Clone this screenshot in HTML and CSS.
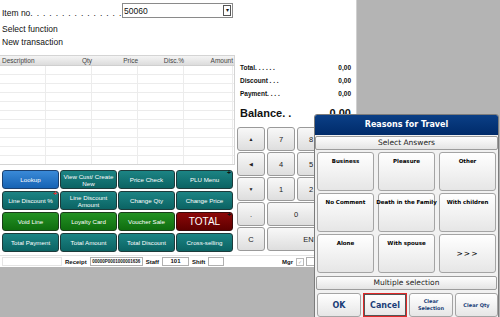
FILE: index.html
```html
<!DOCTYPE html>
<html lang="en">
<head>
    <meta charset="UTF-8">
    <title>POS - Reasons for Travel</title>
    <link rel="stylesheet" href="styles.css">
</head>
<body>
    <div class="screen">
        <div class="main">
            <div class="left">
                <div class="item-row">
                    <span class="item-label">Item no.<span class="dots"> . . . . . . . . . . . . . .</span></span>
                    <div class="item-input">
                        <span>50060</span>
                        <span class="drop">&#9662;</span>
                    </div>
                </div>
                <div class="info-line">Select function</div>
                <div class="info-line">New transaction</div>

                <div class="grid-table">
                    <div class="grid-head">
                        <div class="col c-desc">Description</div>
                        <div class="col">Qty</div>
                        <div class="col">Price</div>
                        <div class="col">Disc.%</div>
                        <div class="col c-amount">Amount</div>
                    </div>
                    <div class="grid-body">
                        <div class="col"></div>
                        <div class="col"></div>
                        <div class="col"></div>
                        <div class="col"></div>
                        <div class="col c-amount"></div>
                    </div>
                </div>

                <div class="func-grid">
                    <button class="fbtn blue">Lookup</button>
                    <button class="fbtn teal">View Cust/ Create New</button>
                    <button class="fbtn teal">Price Check</button>
                    <button class="fbtn teal has-more">PLU Menu</button>
                    <button class="fbtn teal has-more red-mark">Line Discount %</button>
                    <button class="fbtn teal">Line Discount Amount</button>
                    <button class="fbtn teal">Change Qty</button>
                    <button class="fbtn teal">Change Price</button>
                    <button class="fbtn green">Void Line</button>
                    <button class="fbtn green">Loyalty Card</button>
                    <button class="fbtn green">Voucher Sale</button>
                    <button class="fbtn red total has-more">TOTAL</button>
                    <button class="fbtn teal">Total Payment</button>
                    <button class="fbtn teal">Total Amount</button>
                    <button class="fbtn teal">Total Discount</button>
                    <button class="fbtn teal">Cross-selling</button>
                </div>
            </div>

            <div class="right">
                <div class="sum-line"><span>Total. . . . . .</span><span>0,00</span></div>
                <div class="sum-line"><span>Discount . . .</span><span>0,00</span></div>
                <div class="sum-line"><span>Payment. . . .</span><span>0,00</span></div>
                <div class="balance"><span>Balance. .</span><span>0,00</span></div>

                <!-- last column sits under the dialog -->
                <div class="numpad">
                    <button class="key arrow">&#9650;</button>
                    <button class="key">7</button>
                    <button class="key">8</button>
                    <button class="key"></button>
                    <button class="key arrow">&#9664;</button>
                    <button class="key">4</button>
                    <button class="key">5</button>
                    <button class="key"></button>
                    <button class="key arrow">&#9660;</button>
                    <button class="key">1</button>
                    <button class="key">2</button>
                    <button class="key"></button>
                    <button class="key">.</button>
                    <button class="key span2">0</button>
                    <button class="key"></button>
                    <button class="key">C</button>
                    <button class="key span3 enter">ENTER</button>
                </div>
            </div>
        </div>

        <div class="statusbar">
            <div class="sbox wide"></div>
            <span class="slabel">Receipt</span>
            <div class="sbox receipt">00000P0001000001636</div>
            <span class="slabel">Staff</span>
            <div class="sbox staff">101</div>
            <span class="slabel">Shift</span>
            <div class="sbox shift"></div>
            <span class="spacer"></span>
            <span class="slabel">Mgr</span>
            <span class="scheck">&#10003;</span>
            <div class="sbox mgr"></div>
        </div>
    </div>

    <div class="dialog">
        <div class="dlg-title">Reasons for Travel</div>
        <div class="dlg-bar">Select Answers</div>
        <div class="answers">
            <button class="answer">Business</button>
            <button class="answer">Pleasure</button>
            <button class="answer">Other</button>
            <button class="answer">No Comment</button>
            <button class="answer">Death in the Family</button>
            <button class="answer">With children</button>
            <button class="answer">Alone</button>
            <button class="answer">With spouse</button>
            <button class="answer more">&gt;&gt;&gt;</button>
        </div>
        <div class="dlg-bar multi">Multiple selection</div>
        <div class="dlg-actions">
            <button class="act big">OK</button>
            <button class="act big cancel">Cancel</button>
            <button class="act">Clear<br>Selection</button>
            <button class="act">Clear Qty</button>
        </div>
    </div>
</body>
</html>
```

FILE: styles.css
```css
body {
    margin: 0;
    width: 500px;
    height: 317px;
    overflow: hidden;
    background-color: #b4b4b4;
    font-family: 'Liberation Sans', Arial, sans-serif;
    color: #111;
    position: relative;
}

button {
    font-family: inherit;
    margin: 0;
    padding: 0;
    cursor: pointer;
}

.screen {
    width: 356px;
    height: 267px;
    background-color: #fff;
    border-right: 1px solid #d0d0d0;
    display: flex;
    flex-direction: column;
}

.main {
    display: flex;
    height: 255px;
}

.left {
    width: 236px;
}

/* item entry */
.item-row {
    height: 23px;
    display: flex;
    align-items: flex-start;
}

.item-label {
    font-size: 8.5px;
    padding: 8px 0 0 2px;
    width: 120px;
    white-space: nowrap;
    overflow: hidden;
}

.dots {
    word-spacing: 1.6px;
}

.item-input {
    margin-top: 3px;
    width: 108px;
    height: 13px;
    border: 1px solid #8a8a8a;
    display: flex;
    justify-content: space-between;
    align-items: center;
    font-size: 8.5px;
    padding-left: 1px;
}

.drop {
    width: 6px;
    height: 9px;
    border: 1px solid #555;
    font-size: 6px;
    line-height: 9px;
    text-align: center;
    margin-right: 1px;
}

.info-line {
    height: 13px;
    line-height: 13px;
    font-size: 8.5px;
    padding-left: 2px;
}

/* transaction grid */
.grid-table {
    margin-top: 6px;
    width: 234px;
    border: 1px solid #d4d4d4;
    border-left: none;
}

.grid-head {
    display: flex;
    height: 9px;
    background: linear-gradient(#f4f4f4, #dcdcdc);
    border-bottom: 1px solid #cfcfcf;
    font-size: 6.5px;
    line-height: 9px;
    color: #444;
}

.grid-head .col {
    text-align: right;
    padding-right: 1px;
}

.grid-head .c-desc {
    text-align: left;
    padding-left: 2px;
}

.col {
    width: 46px;
    box-sizing: border-box;
}

.c-desc {
    width: 47px;
}

.c-amount {
    width: 49px;
}

.grid-body {
    display: flex;
    height: 98px;
    background: repeating-linear-gradient(#fff 0, #fff 8px, #ececec 8px, #ececec 9px);
}

.grid-body .col {
    border-right: 1px solid #ececec;
}

/* function buttons */
.func-grid {
    margin-top: 5px;
    padding-left: 2px;
    display: grid;
    grid-template-columns: repeat(4, 57px);
    grid-template-rows: repeat(4, 19px);
    column-gap: 1px;
    row-gap: 2px;
}

.fbtn {
    position: relative;
    border: 1px solid #1d3b3b;
    border-radius: 3px;
    color: #fff;
    font-size: 6.2px;
    line-height: 7px;
    text-align: center;
    padding: 0;
}

.fbtn.blue {
    background: linear-gradient(#3a8ad8, #1663b4);
    border-color: #1b4170;
}

.fbtn.teal {
    background: linear-gradient(#1c8484, #0b6363);
}

.fbtn.green {
    background: linear-gradient(#249224, #0f6d0f);
    border-color: #1a3d1a;
}

.fbtn.red {
    background: linear-gradient(#8c0808, #5e0000);
    border-color: #3a0a0a;
}

.fbtn.total {
    font-size: 10px;
}

.has-more::after {
    content: '+';
    position: absolute;
    top: -2px;
    right: 1px;
    font-size: 7px;
    font-weight: bold;
    color: #111;
}

.red-mark::after {
    color: #e03030;
}

/* totals panel */
.right {
    width: 120px;
    padding-top: 61px;
    box-sizing: border-box;
}

.sum-line {
    display: flex;
    justify-content: space-between;
    height: 13px;
    line-height: 13px;
    font-size: 6.5px;
    font-weight: bold;
    padding: 0 5px 0 4px;
}

.balance {
    display: flex;
    justify-content: space-between;
    margin-top: 5px;
    height: 16px;
    line-height: 16px;
    font-size: 11px;
    font-weight: bold;
    padding: 0 5px 0 4px;
}

.numpad {
    margin-top: 6px;
    padding-left: 1px;
    display: grid;
    grid-template-columns: repeat(4, 28px);
    grid-template-rows: repeat(5, 24px);
    gap: 1px 2px;
}

.key {
    background: linear-gradient(#f8f8f8, #dedede);
    border: 1px solid #9a9a9a;
    border-radius: 3px;
    font-size: 7.5px;
    color: #222;
}

.key.arrow {
    font-size: 5px;
}

.key.span2 {
    grid-column: span 2;
}

.key.span3 {
    grid-column: span 3;
}

.key.enter {
    padding-left: 10px;
}

/* status bar */
.statusbar {
    height: 12px;
    display: flex;
    align-items: center;
    gap: 2px;
    padding-left: 2px;
    border-top: 1px solid #e2e2e2;
    box-sizing: border-box;
}

.slabel {
    font-size: 6px;
    font-weight: bold;
    padding: 0 1px;
}

.sbox {
    height: 9px;
    border: 1px solid #b0b0b0;
    box-sizing: border-box;
    font-size: 4.5px;
    font-weight: bold;
    line-height: 7px;
    text-align: center;
    overflow: hidden;
}

.sbox.wide {
    width: 60px;
    border-color: #e4e4e4;
}

.sbox.receipt {
    width: 53px;
}

.sbox.staff {
    width: 27px;
    font-size: 6px;
}

.sbox.shift {
    width: 16px;
}

.sbox.mgr {
    width: 50px;
}

.spacer {
    flex: 1;
}

.scheck {
    width: 6px;
    height: 6px;
    border: 1px solid #b8b8b8;
    font-size: 5px;
    line-height: 6px;
    color: #aaa;
    text-align: center;
}

/* reasons dialog (overlay) */
.dialog {
    position: absolute;
    left: 314px;
    top: 114px;
    width: 185px;
    height: 210px;
    background-color: #f1f1f1;
    border: 1px solid #7c7c7c;
    border-radius: 3px 3px 0 0;
    font-family: 'DejaVu Sans', Verdana, sans-serif;
    box-sizing: border-box;
}

.dlg-title {
    height: 20px;
    line-height: 20px;
    background: linear-gradient(#0b3f86, #002b6a);
    color: #fff;
    font-size: 8px;
    font-weight: bold;
    text-align: center;
    border-radius: 2px 2px 0 0;
}

.dlg-bar {
    margin: 1px 0 0 0;
    height: 12px;
    line-height: 12px;
    background: linear-gradient(#fdfdfd, #e4e4e4);
    border: 1px solid #9c9c9c;
    border-radius: 2px;
    font-size: 7.5px;
    text-align: center;
    color: #222;
}

.dlg-bar.multi {
    margin: 3px 1px 0 1px;
}

.answers {
    display: grid;
    grid-template-columns: repeat(3, 57px);
    grid-template-rows: repeat(3, 39px);
    gap: 2px 4px;
    padding: 2px 0 0 2px;
}

.answer {
    background: linear-gradient(#ffffff, #e6e6e6);
    border: 1px solid #a4a4a4;
    border-radius: 3px;
    font-size: 5.5px;
    font-weight: bold;
    color: #000;
    display: flex;
    justify-content: center;
    align-items: flex-start;
    padding-top: 5px;
    white-space: nowrap;
}

.answer.more {
    align-items: center;
    padding-top: 0;
    font-size: 7.5px;
    font-weight: normal;
    letter-spacing: 1px;
}

.dlg-actions {
    display: grid;
    grid-template-columns: 44px 44px 44px 43px;
    height: 24px;
    gap: 2px;
    padding: 3px 0 0 2px;
}

.act {
    background: linear-gradient(#ffffff, #e6e6e6);
    border: 1px solid #a4a4a4;
    border-radius: 3px;
    font-size: 5px;
    font-weight: bold;
    color: #1b3d78;
    line-height: 7px;
}

.act.big {
    font-size: 8px;
}

.act.cancel {
    border: 1px solid #e02828;
    box-shadow: inset 0 0 0 1px #555;
    border-radius: 0;
}
```
